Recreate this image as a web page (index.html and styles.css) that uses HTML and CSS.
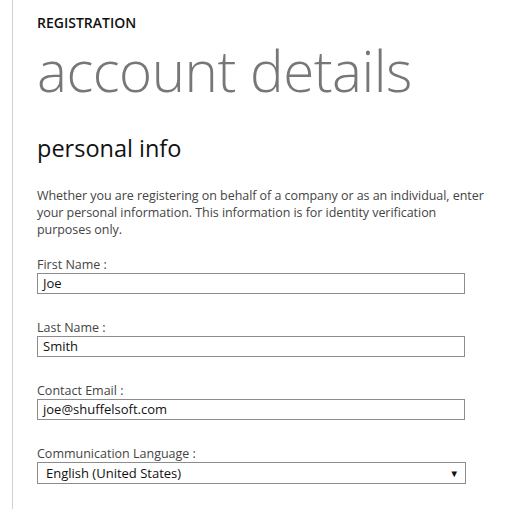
FILE: index.html
```html
<!DOCTYPE html>
<html lang="en">
<head>
<meta charset="utf-8">
<title>Registration - account details</title>
<link rel="stylesheet" href="styles.css">
</head>
<body>
<div class="page">
  <div class="eyebrow">REGISTRATION</div>
  <h1 class="title">account details</h1>
  <h2 class="section">personal info</h2>
  <p class="intro">Whether you are registering on behalf of a company or as an individual, enter your personal information. This information is for identity verification purposes only.</p>
  <div class="fields">
    <div class="field">
      <label class="label">First Name :</label>
      <div class="input">Joe</div>
    </div>
    <div class="field">
      <label class="label">Last Name :</label>
      <div class="input">Smith</div>
    </div>
    <div class="field">
      <label class="label">Contact Email :</label>
      <div class="input">joe@shuffelsoft.com</div>
    </div>
    <div class="field">
      <label class="label">Communication Language :</label>
      <div class="select"><span>English (United States)</span><span class="arrow">&#9660;</span></div>
    </div>
  </div>
</div>
</body>
</html>
```
FILE: styles.css
```css
html, body {
  margin: 0;
  padding: 0;
  background: #fff;
}
body {
  font-family: "Open Sans", "Noto Sans", sans-serif;
  color: #444;
}
.page {
  margin-left: 12px;
  border-left: 1px solid #d0d0d0;
  padding: 13px 0 20px 24px;
  width: 450px;
  min-height: 476px;
}
.eyebrow {
  font-size: 14px;
  font-weight: 600;
  color: #111;
  line-height: 20px;
}
.title {
  margin: 3px 0 0;
  font-size: 56.5px;
  font-weight: 300;
  color: #777;
  line-height: 70px;
  letter-spacing: -0.5px;
}
.section {
  margin: 27px 0 0;
  font-size: 23.5px;
  font-weight: 400;
  color: #111;
  line-height: 30px;
}
.intro {
  margin: 24px 0 0;
  font-size: 12.5px;
  line-height: 17px;
  color: #444;
  width: 449px;
  letter-spacing: -0.05px;
}
.fields {
  margin-top: 18px;
  display: flex;
  flex-direction: column;
  gap: 25px;
  width: 429px;
}
.field {
  display: flex;
  flex-direction: column;
}
.label {
  font-size: 12.5px;
  line-height: 17px;
  color: #444;
}
.input, .select {
  box-sizing: border-box;
  width: 428px;
  height: 21px;
  border: 1px solid #8c8c8c;
  font-size: 13px;
  line-height: 19px;
  color: #111;
  padding: 0 5px;
}
.select {
  width: 429px;
  height: 22px;
  padding: 0 6px 0 8px;
  display: flex;
  justify-content: space-between;
  align-items: center;
}
.arrow {
  font-size: 9.5px;
  color: #111;
}
```
